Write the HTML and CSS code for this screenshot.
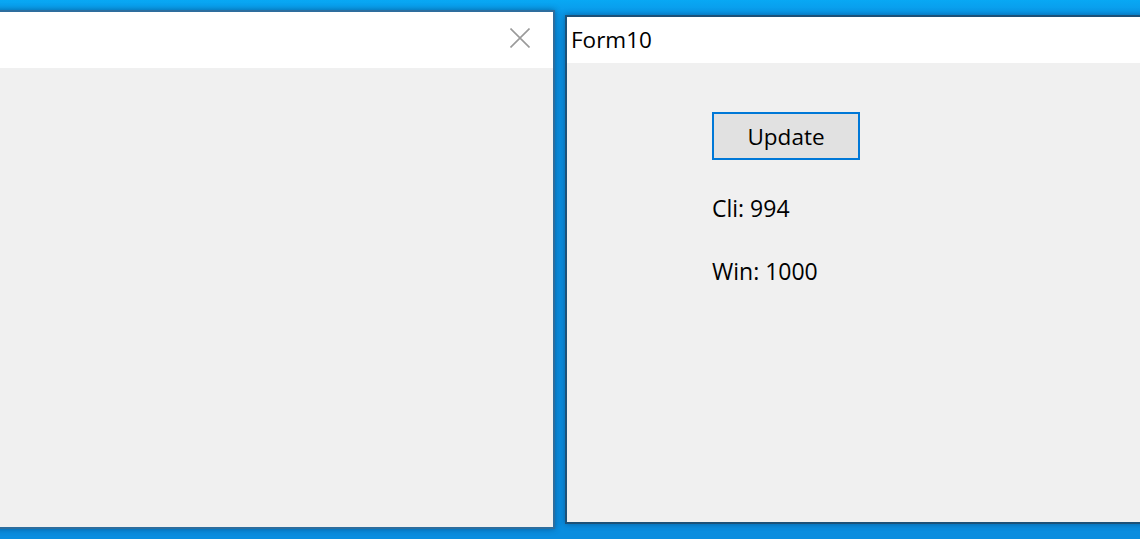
FILE: index.html
```html
<!DOCTYPE html>
<html>
<head>
<meta charset="utf-8">
<link rel="stylesheet" href="styles.css">
</head>
<body>
<div class="desktop">
  <div class="window win-left">
    <div class="titlebar titlebar-left">
      <span class="title"></span>
      <svg class="close" width="20" height="20" viewBox="0 0 20 20">
        <path d="M0.5 0.5 L19.5 19.5 M19.5 0.5 L0.5 19.5" stroke="#9a9a9a" stroke-width="1.6" fill="none"/>
      </svg>
    </div>
    <div class="client"></div>
  </div>
  <div class="window win-right">
    <div class="titlebar titlebar-right">
      <span class="title">Form10</span>
    </div>
    <div class="client client-form">
      <button class="btn">Update</button>
      <div class="label label-cli">Cli: 994</div>
      <div class="label label-win">Win: 1000</div>
    </div>
  </div>
</div>
</body>
</html>
```

FILE: styles.css
```css
html, body {
  margin: 0;
  padding: 0;
  width: 1140px;
  height: 539px;
  overflow: hidden;
}
body {
  font-family: "Open Sans", "Noto Sans", sans-serif;
  color: #000;
}
.desktop {
  position: relative;
  width: 1140px;
  height: 539px;
  background: linear-gradient(to bottom, #08a8f4 0px, #0a98e8 14px, #0a8fe0 40px, #0a8ddf 100%);
  overflow: hidden;
}
.window {
  position: absolute;
  box-sizing: border-box;
  display: flex;
  flex-direction: column;
  box-shadow: 0 0 6px rgba(0, 40, 80, 0.45);
}
.win-left {
  left: -20px;
  top: 10px;
  width: 575px;
  height: 519px;
  border: 2px solid #2e6e9e;
}
.win-right {
  left: 565px;
  top: 15px;
  width: 600px;
  height: 509px;
  border: 2px solid #1c5178;
}
.titlebar {
  background: #ffffff;
  display: flex;
  align-items: center;
  flex: none;
}
.titlebar-left {
  height: 56px;
  justify-content: flex-end;
  padding-right: 23px;
}
.close {
  display: block;
  margin-top: -4px;
}
.titlebar-right {
  height: 46px;
  padding-left: 4px;
}
.title {
  font-size: 22.5px;
  line-height: 32px;
}
.client {
  flex: 1;
  background: #f0f0f0;
}
.client-form {
  display: flex;
  flex-direction: column;
  align-items: flex-start;
  padding-left: 145px;
  padding-top: 49px;
}
.btn {
  box-sizing: border-box;
  width: 148px;
  height: 48px;
  border: 2px solid #0078d7;
  background: #e1e1e1;
  font-family: "Open Sans", "Noto Sans", sans-serif;
  font-size: 22.5px;
  line-height: 32px;
  color: #000;
  padding: 2px 0 0 0;
  margin: 0;
}
.label {
  font-size: 23px;
  line-height: 32px;
}
.label-cli {
  margin-top: 32px;
}
.label-win {
  margin-top: 31px;
}
```
